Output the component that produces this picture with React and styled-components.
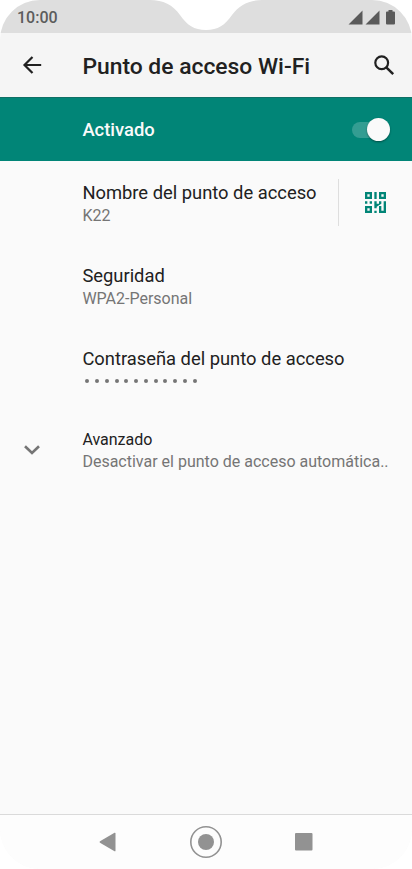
import React from 'react';
import styled, { createGlobalStyle } from 'styled-components';

const GlobalStyle = createGlobalStyle`
  * {
    box-sizing: border-box;
  }

  body {
    margin: 0;
    background: #fff;
    font-family: Roboto, sans-serif;
  }
`;

const Screen = styled.div`
  width: 412px;
  height: 869px;
  display: flex;
  flex-direction: column;
  overflow: hidden;
  border-radius: 40px;
  background: #fafafa;
  color: #212121;
`;

const StatusBar = styled.header`
  position: relative;
  height: 33px;
  flex: none;
  display: flex;
  justify-content: space-between;
  align-items: center;
  padding: 1px 17px 0;
  background: #dedede;
`;

const Notch = styled.svg`
  position: absolute;
  top: 0;
  left: 150px;
`;

const Clock = styled.span`
  padding-top: 2px;
  font-size: 16px;
  font-weight: 500;
  line-height: 20px;
  color: #5c5c5c;
`;

const StatusIcons = styled.svg`
  display: block;
`;

const AppBar = styled.div`
  height: 64px;
  flex: none;
  display: flex;
  align-items: center;
  background: #f5f5f5;
`;

const IconSlot = styled.div`
  width: ${(props) => props.$width || 82.4}px;
  flex: none;
  display: flex;
  align-items: center;
  padding-left: ${(props) => props.$indent || 0}px;
`;

const Title = styled.h1`
  flex: 1;
  margin: 0;
  padding-top: 4px;
  font-size: 22.85px;
  font-weight: 500;
  line-height: 28px;
  white-space: nowrap;
`;

const SwitchBar = styled.div`
  height: 64px;
  flex: none;
  display: flex;
  align-items: center;
  justify-content: space-between;
  padding: 0 22px 0 82.4px;
  background: #018577;
  border-top: 1px solid #107065;
`;

const SwitchLabel = styled.span`
  padding-top: 1px;
  font-size: 18.4px;
  font-weight: 500;
  line-height: 24px;
  color: #fafafa;
`;

const Track = styled.div`
  width: 38px;
  height: 16px;
  display: flex;
  align-items: center;
  justify-content: flex-end;
  border-radius: 8px;
  background: #339d92;
`;

const Thumb = styled.div`
  width: 23px;
  height: 23px;
  flex: none;
  border-radius: 50%;
  background: #fafafa;
  box-shadow: 0 1px 2px rgba(0, 0, 0, 0.4);
`;

const Settings = styled.main`
  flex: 1;
  display: flex;
  flex-direction: column;
`;

const Row = styled.div`
  height: ${(props) => props.$height || 83}px;
  display: flex;
  align-items: center;
`;

const RowText = styled.div`
  flex: 1;
  min-width: 0;
  padding-top: 2px;
`;

const RowTitle = styled.div`
  font-size: ${(props) => (props.$small ? 16 : 18.35)}px;
  line-height: ${(props) => (props.$small ? 22 : 24)}px;
  white-space: nowrap;
`;

const RowSummary = styled.div`
  font-size: 16px;
  line-height: 22px;
  color: #757575;
  white-space: nowrap;
`;

const Dots = styled.div`
  height: 20px;
  margin-bottom: 2px;
  display: flex;
  align-items: center;
  gap: 5.75px;
  padding-left: 3px;
`;

const Dot = styled.span`
  width: 4px;
  height: 4px;
  border-radius: 50%;
  background: #757575;
`;

const QrButton = styled.div`
  width: 74px;
  height: 47px;
  flex: none;
  display: flex;
  align-items: center;
  padding-left: 26px;
  border-left: 1px solid #dedede;
`;

const NavBar = styled.nav`
  height: 55px;
  flex: none;
  display: flex;
  align-items: center;
  justify-content: space-between;
  padding: 0 99px 1px;
  background: #fdfdfd;
  border-top: 1px solid #dadada;
`;

const BackArrow = () => (
  <svg width="20" height="20" viewBox="0 0 20 20" fill="none" stroke="#212121" strokeWidth="2.2">
    <path d="M10.5 2 2.5 10l8 8M2.5 10h16.7" />
  </svg>
);

const SearchIcon = () => (
  <svg width="21" height="21" viewBox="0 0 21 21" fill="none" stroke="#212121">
    <circle cx="7.7" cy="7.7" r="6.4" strokeWidth="2.2" />
    <path d="m12.3 12.3 6.9 6.9" strokeWidth="2.5" />
  </svg>
);

const ChevronIcon = () => (
  <svg width="16" height="10" viewBox="0 0 16 10" fill="none" stroke="#757575" strokeWidth="2.6">
    <path d="m1 1.2 7 6.8 7-6.8" />
  </svg>
);

const QrIcon = () => (
  <svg width="21" height="21" viewBox="0 0 63 63" fill="#018577">
    <path
      fillRule="evenodd"
      d="M0 0h21v21H0zM7 7v7h7V7zM42 0h21v21H42zM49 7v7h7V7zM0 42h21v21H0zM7 49v7h7v-7z"
    />
    <path d="M28 0h7v21h-7zM0 28h7v7H0zM14 28h7v7h-7zM28 28h7v7h7v-7h7v7l-14 9v5h-7zM56 28h7v35H42V42h7v14h7zM28 56h7v7h-7z" />
  </svg>
);

export default function App() {
  return (
    <>
      <GlobalStyle />
      <Screen>
        <StatusBar>
          <Clock>10:00</Clock>
          <Notch width="112" height="31" viewBox="0 0 112 31" fill="#fff">
            <path d="M0 0C13 0 23 5 30 15c7 10 14 15 26 15s19-5 26-15C89 5 99 0 112 0z" />
          </Notch>
          <StatusIcons width="47" height="15" viewBox="0 0 47 15" fill="#5a5a5a">
            <path d="M.5 14.5 14.5.5v14zM17.5 14.5 31.5.5v14z" />
            <path d="M40.5 0h4v1.5H46q1 0 1 1v11q0 1-1 1h-7q-1 0-1-1v-11q0-1 1-1h1.5z" />
          </StatusIcons>
        </StatusBar>

        <AppBar>
          <IconSlot $indent={22}>
            <BackArrow />
          </IconSlot>
          <Title>Punto de acceso Wi-Fi</Title>
          <IconSlot $width={38}>
            <SearchIcon />
          </IconSlot>
        </AppBar>

        <SwitchBar>
          <SwitchLabel>Activado</SwitchLabel>
          <Track>
            <Thumb />
          </Track>
        </SwitchBar>

        <Settings>
          <Row>
            <IconSlot />
            <RowText>
              <RowTitle>Nombre del punto de acceso</RowTitle>
              <RowSummary>K22</RowSummary>
            </RowText>
            <QrButton>
              <QrIcon />
            </QrButton>
          </Row>
          <Row>
            <IconSlot />
            <RowText>
              <RowTitle>Seguridad</RowTitle>
              <RowSummary>WPA2-Personal</RowSummary>
            </RowText>
          </Row>
          <Row>
            <IconSlot />
            <RowText>
              <RowTitle>Contraseña del punto de acceso</RowTitle>
              <Dots>
                {Array.from({ length: 12 }, (_, i) => (
                  <Dot key={i} />
                ))}
              </Dots>
            </RowText>
          </Row>
          <Row $height={80}>
            <IconSlot $indent={24}>
              <ChevronIcon />
            </IconSlot>
            <RowText>
              <RowTitle $small>Avanzado</RowTitle>
              <RowSummary>Desactivar el punto de acceso automática..</RowSummary>
            </RowText>
          </Row>
        </Settings>

        <NavBar>
          <svg width="18" height="20" viewBox="0 0 18 20" fill="#929292">
            <path d="M1 9.2 15.5.8q1-.4 1 .8v16.8q0 1.2-1 .8L1 10.800q-1-.8 0-1.600z" />
          </svg>
          <svg width="32" height="32" viewBox="0 0 32 32">
            <circle cx="16" cy="16" r="15.2" fill="none" stroke="#929292" strokeWidth="1.6" />
            <circle cx="16" cy="16" r="8" fill="#929292" />
          </svg>
          <svg width="18" height="18" viewBox="0 0 18 18">
            <rect x="0" y="0" width="17.5" height="17.5" rx="1" fill="#929292" />
          </svg>
        </NavBar>
      </Screen>
    </>
  );
}
